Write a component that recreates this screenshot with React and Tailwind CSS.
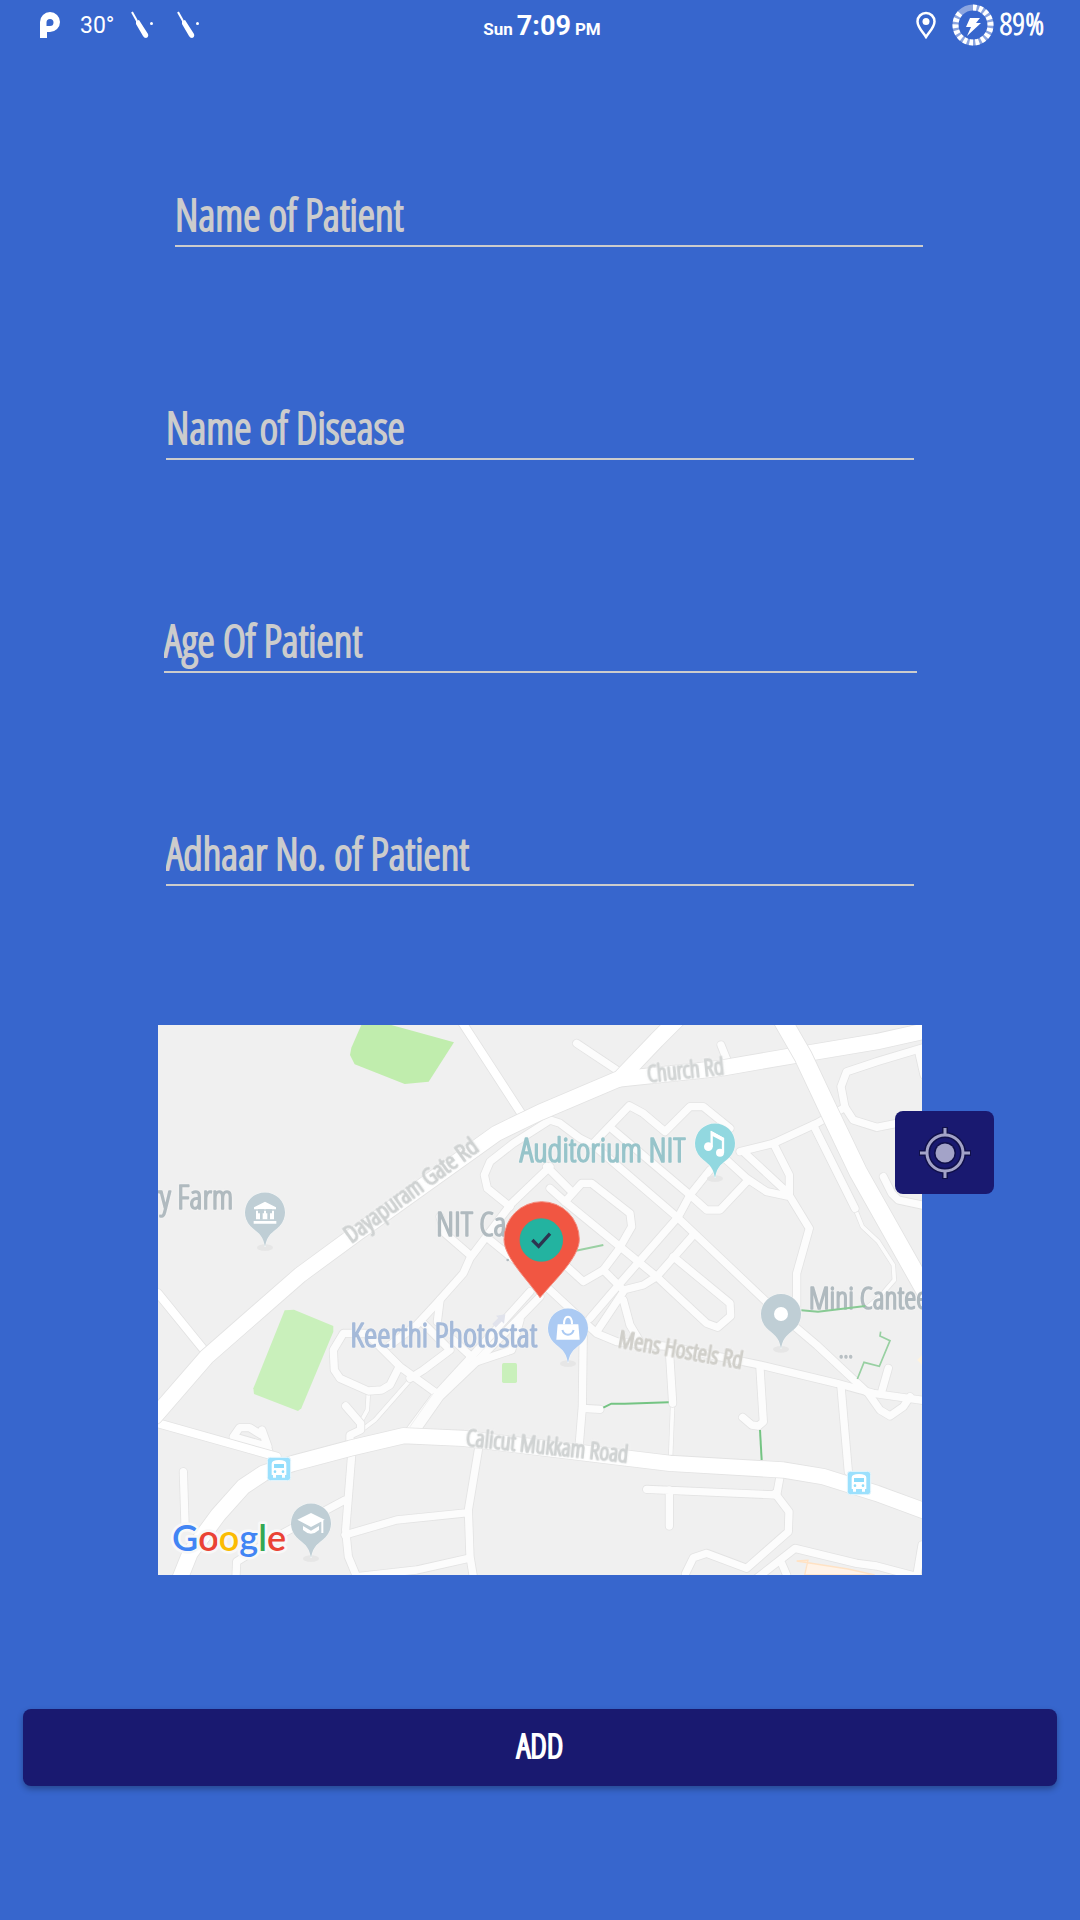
const HAND =
  "font-['Open_Sans_Condensed_Light','Open_Sans_Condensed','Liberation_Sans',sans-serif]";

const fields = [
  { id: "patient", label: "Name of Patient", box: "ml-[175px] mr-[157px]" },
  { id: "disease", label: "Name of Disease", box: "mx-[166px]" },
  { id: "age", label: "Age Of Patient", box: "ml-[164px] mr-[163px]" },
  { id: "adhaar", label: "Adhaar No. of Patient", box: "mx-[166px]" },
];

const majorRoads = [
  "M-10 1175L146 995L306 855L426 750L596 625L1016 325L1096 286L1146 262L1386 160L1496 45L1556 -15",
  "M1386 162L1686 130L1946 85L2156 50L2300 18",
  "M60 1675L96 1585L180 1470L256 1385L316 1345L406 1315L576 1270L736 1232L916 1240L1146 1268L1536 1315L1876 1335L1996 1355L2156 1405L2300 1458",
];

const minorRoads = [
  "M1256 55L1376 135",
  "M1689 60L1711 115",
  "M2300 67L2156 110L2066 140L2049 185L2061 247L2086 285L2156 307L2216 295",
  "M2281 75L2298 150",
  "M2061 247L1976 295L1846 355L1746 380",
  "M1966 300L2091 550",
  "M2176 455L2201 505L2221 525L2300 542",
  "M1056 545L988 490L979 450L996 410L1066 355L1176 285L1206 295L1266 340L1306 360L1556 575L1846 850L1976 960L2131 1105L2166 1155L2196 1173L2236 1145L2256 1115",
  "M1306 355L1414 242L1456 265L1521 320L1596 245L1636 245L1716 310",
  "M1366 315L1596 510L1646 555L1686 555L1766 470",
  "M1706 405L1766 460L1826 500L1896 515L1954 610L1916 745L1916 855",
  "M1756 380L1891 505M1846 355L1894 450L1894 510",
  "M1656 435L1596 510L1561 575L1386 775L1296 880",
  "M1176 425L1061 535L936 700L916 745L836 835L776 900L696 960",
  "M1166 425L1241 500",
  "M1221 530L1271 475L1301 475L1416 565L1421 605L1381 675L1336 735L1276 770L1216 715",
  "M1176 490L1221 530L1496 755L1646 895L1679 907L1718 873L1716 835L1546 695",
  "M1606 630L1496 755L1456 780L1396 795L1336 735",
  "M1396 800L1316 920M1396 825L1416 900L1446 950",
  "M1160 780L1316 925L1376 950L1536 965L1806 1020L2036 1075L2146 1105L2300 1127",
  "M1276 900L1273 1145L1264 1255M1273 1150L1326 1153",
  "M1534 975L1544 1135",
  "M1806 1030L1816 1190L1801 1203L1781 1200L1754 1177",
  "M2049 1085L2071 1340",
  "M2191 1030L2171 1100",
  "M1466 1393L1856 1410L1866 1355M1534 1395L1534 1503",
  "M1851 1405L1893 1460L1891 1520L1766 1630L1646 1585L1606 1598L1583 1645",
  "M1796 1660L1911 1570L2096 1615L2156 1623L2276 1655L2292 1560M1871 1615L1886 1650",
  "M1116 800L936 1000L826 1120L756 1215",
  "M1146 815L956 1010L846 1115L776 1215",
  "M846 825L838 890M796 895L876 975L796 1035L756 1060",
  "M836 1105L726 1025L626 925L556 925L526 975L529 1035L546 1060L631 1098L671 1095L696 1080L721 1030",
  "M1086 885L1061 975L956 1010L886 945",
  "M563 1143L608 1195L608 1215L576 1230L576 1255",
  "M581 1290L563 1515L571 1595L596 1655L776 1635L931 1600",
  "M561 1530L716 1485L931 1463M961 1275L931 1455L936 1595L946 1655",
  "M561 1425L356 1535L236 1610L234 1655",
  "M76 1340L81 1495",
  "M846 575L861 625L936 690M996 645L1076 710",
  "M226 1235L245 1208L275 1208L310 1230M226 1235L330 1265L312 1215L336 1290",
];

const lesserRoads = [
  "M2091 550L2113 605L2161 650L2206 720L2209 765L2166 815L2130 845",
  "M1544 1135L1538 1290",
  "M631 1105L628 1155L606 1195",
  "M761 1060L651 1185L611 1215",
];

const sideRoads = ["M911 -10L1096 275", "M0 805L146 985", "M-10 1192L356 1295"];
const highway = ["M1870 -20L1936 95L2016 265L2100 440L2300 795"];

function Roads({ paths, casing, width, fill }) {
  return (
    <>
      {paths.map((d) => (
        <path key={"c" + d} d={d} stroke="#e3e3e3" strokeWidth={casing} />
      ))}
      {paths.map((d) => (
        <path key={d} d={d} stroke={fill} strokeWidth={width} />
      ))}
    </>
  );
}

function Pin({ x, y, color, children }) {
  return (
    <g transform={`translate(${x} ${y})`}>
      <ellipse cx="0" cy="106" rx="24" ry="10" fill="#e6e6e6" />
      <path
        d="M0 104C-6 66-22 62-44 41A60 60 0 1 1 44 41C22 62 6 66 0 104Z"
        fill={color}
        stroke="#f6f8f8"
        strokeWidth="3"
        paintOrder="stroke"
      />
      {children}
    </g>
  );
}

function Bus({ x, y }) {
  return (
    <g transform={`translate(${x} ${y})`}>
      <rect x="-35" y="-35" width="70" height="70" rx="9" fill="#9be0fd" stroke="#e8f6fc" strokeWidth="3" />
      <path
        d="M-22-16Q-22-27 0-27Q22-27 22-16V18H18V26H9V18H-9V26H-18V18H-22Z"
        fill="#fff"
      />
      <path d="M-15-15H15V-3H-15Z" fill="#8edcfb" />
      <circle cx="-12" cy="8" r="4" fill="#8edcfb" />
      <circle cx="12" cy="8" r="4" fill="#8edcfb" />
    </g>
  );
}

function Label({ x, y, size, color, angle = 0, anchor = "start", children }) {
  return (
    <text
      transform={`translate(${x} ${y}) rotate(${angle})`}
      fontSize={size}
      textAnchor={anchor}
      fill={color}
      stroke={color}
      strokeWidth="5"
      strokeLinejoin="round"
      className="[filter:drop-shadow(0_0_4px_#f6f6f6)]"
    >
      {children}
    </text>
  );
}

function Map() {
  return (
    <svg
      viewBox="0 0 2292 1650"
      className={"block w-full bg-[#f0f0f0] " + HAND}
      role="img"
      aria-label="Map around NIT Calicut"
    >
      <path d="M610 0H700L888 52L812 170L740 177L590 118L576 90L580 68Z" fill="#c0edad" />
      <path d="M380 856L408 854L526 903V920L430 1150L420 1158L288 1107L286 1090Z" fill="#c9f0bb" />
      <rect x="1032" y="1014" width="45" height="60" rx="5" fill="#c9f0bb" />
      <path d="M1916 1608L1950 1606L1940 1650H2150L2070 1632Z" fill="#fff3e8" stroke="#ffe2c4" strokeWidth="4" />
      <path d="M2278 1005L2292 990V1020Z" fill="#fff3dd" />
      <g fill="none" strokeLinecap="round" strokeLinejoin="round">
        <Roads paths={lesserRoads} casing="15" width="11" fill="#fcfcfc" />
        <Roads paths={minorRoads} casing="27" width="22" fill="#fcfcfc" />
        <Roads paths={sideRoads} casing="29" width="24" fill="#fff" />
        <Roads paths={majorRoads} casing="51" width="46" fill="#fff" />
        <Roads paths={highway} casing="58" width="53" fill="#fff" />
        <path d="M1008 902L1030 880" stroke="#e1e3ec" strokeWidth="15" strokeLinecap="butt" />
        <path d="M1014 872L1042 868L1038 896Z" fill="#e1e3ec" />
        <path d="M826 1105L756 1205" stroke="#e9e9e9" strokeWidth="2" />
      </g>
      <g fill="none" stroke="#74c483" strokeWidth="6">
        <path d="M1250 678L1336 660" stroke="#9ad0a3" />
        <path d="M1336 1148L1360 1136H1400L1532 1132" />
        <path d="M1806 1215L1811 1305" />
        <path d="M2168 920L2166 933L2196 947L2164 1024L2118 1012L2098 1062" stroke="#98d0a2" strokeWidth="5" />
      </g>
      <circle cx="1049" cy="705" r="4" fill="#b0babf" />

      <Label x="1470" y="172" size="70" angle="-6" color="#d2d5d5">Church Rd</Label>
      <Label x="580" y="656" size="74" angle="-36" color="#cfd2d2">Dayapuram Gate Rd</Label>
      <Label x="922" y="1262" size="70" angle="6" color="#d0d3d3">Calicut Mukkam Road</Label>
      <Label x="1378" y="966" size="70" angle="10" color="#d0cfca">Mens Hostels Rd</Label>
      <Label x="1582" y="412" size="102" anchor="end" color="#97c4ca">Auditorium NIT</Label>
      <Label x="226" y="552" size="102" anchor="end" color="#b0babf">ry Farm</Label>
      <Label x="834" y="634" size="102" color="#b0babf">NIT Ca</Label>
      <Label x="1138" y="967" size="102" anchor="end" color="#a5bad9">Keerthi Photostat</Label>
      <Label x="1952" y="852" size="92" color="#b0babf">Mini Cantee</Label>
      <Label x="2042" y="1000" size="70" color="#b9c0c4">...</Label>
      <path d="M1930 856L1980 860L2122 843" fill="none" stroke="#88ca94" strokeWidth="6" />

      <Pin x={321} y={562} color="#bfced5">
        <path d="M-33-15L0-32L33-15V-9H-33ZM-27-5H27V21H-27ZM-34 26H34V34H-34Z" fill="#fff" />
        <path d="M-21-9H-3V3H-7V22H-15V3H-21ZM3-9H21V3H15V22H7V3H3Z" fill="#bfced5" />
      </Pin>
      <Pin x={1671} y={355} color="#92d8e0">
        <path d="M-10 12V-32L24-14V28" fill="none" stroke="#fff" strokeWidth="7" />
        <path d="M-12-38L27-16V-4L-12-24Z" fill="#fff" />
        <circle cx="-20" cy="10" r="13" fill="#fff" />
        <circle cx="15" cy="28" r="12" fill="#fff" />
      </Pin>
      <Pin x={459} y={1495} color="#bfced5">
        <path d="M0-31L41-11L0 11L-41-11ZM-24 8L0 22L24 8V20Q0 42-24 20ZM31-8H37V29H31Z" fill="#fff" />
      </Pin>
      <Pin x={1869} y={867} color="#bfced5">
        <circle r="21" fill="#fff" />
      </Pin>
      <Pin x={1230} y={910} color="#abcaf3">
        <path d="M-31-12H31L35 34H-35Z" fill="#fff" />
        <path d="M-12-12C-12-42 12-42 12-12" fill="none" stroke="#fff" strokeWidth="6" />
        <path d="M-17 5C-11 24 11 24 17 5" fill="none" stroke="#abcaf3" strokeWidth="6" />
      </Pin>
      <Bus x={363} y={1332} />
      <Bus x={2103} y={1374} />

      <path
        d="M1146 818C1110 765 1038 698 1038 643A113 113 0 0 1 1264 643C1264 698 1190 765 1146 818Z"
        fill="#f15642"
        stroke="#f48c7e"
        strokeWidth="3"
      />
      <circle cx="1150" cy="645" r="64" fill="#23b3a0" stroke="#12b9a5" strokeWidth="2" />
      <path d="M1123 645L1142 664L1176 626" fill="none" stroke="#2d3550" strokeWidth="10" />

      <text
        x="42"
        y="1578"
        fontSize="108"
        stroke="#f8f8f8"
        strokeWidth="16"
        strokeLinejoin="round"
        paintOrder="stroke"
        className="font-['Lato',sans-serif] font-semibold"
      >
        <tspan fill="#4285f4">G</tspan>
        <tspan fill="#ea4335">o</tspan>
        <tspan fill="#fbbc04">o</tspan>
        <tspan fill="#4285f4">g</tspan>
        <tspan fill="#34a853">l</tspan>
        <tspan fill="#ea4335">e</tspan>
      </text>
    </svg>
  );
}

function Screwdriver() {
  return (
    <svg viewBox="0 0 22 28" className="h-7 w-[22px]" fill="none" stroke="#fff" aria-hidden="true">
      <path d="M1 1L6 10" strokeWidth="2" />
      <path d="M5 10L8 9L17 23Q18 26 15 27Q13 27 12 25L5 13Z" fill="#fff" stroke="none" />
      <circle cx="20.500" cy="12.500" r="1.500" fill="#fff" stroke="none" />
    </svg>
  );
}

function StatusBar() {
  return (
    <header className="grid h-[50px] grid-cols-[1fr_auto_1fr] items-center pr-9 pl-10 text-white">
      <div className="flex items-center">
        <svg viewBox="0 0 20 26" className="h-[26px] w-5" aria-hidden="true">
          <path
            fillRule="evenodd"
            fill="#fff"
            d="M0 26V10A10 10 0 1 1 10 20H7V26ZM10 7A3.500 3.500 0 0 0 6.500 10.500V14H10A3.500 3.500 0 0 0 10 7Z"
          />
        </svg>
        <span className="ml-5 w-[51px] pt-0.5 font-['Roboto',sans-serif] text-[23px] leading-[30px] font-normal">30°</span>
        <Screwdriver />
        <span className="w-6" />
        <Screwdriver />
      </div>
      <div className="flex items-baseline gap-1 pt-1 font-['Roboto',sans-serif] font-bold">
        <span className="text-[17px] leading-8">Sun</span>
        <span className="text-[27px] leading-8">7:09</span>
        <span className="text-[17px] leading-8">PM</span>
      </div>
      <div className="flex items-center justify-end">
        <svg viewBox="0 0 20 28" className="mr-4 h-7 w-5" fill="none" stroke="#fff" aria-hidden="true">
          <path d="M10 26C6 20 1.500 16 1.500 10.500A8.500 8.500 0 0 1 18.500 10.500C18.500 16 14 20 10 26Z" strokeWidth="2.500" />
          <circle cx="10" cy="10.500" r="3.500" fill="#fff" stroke="none" />
        </svg>
        <svg viewBox="0 0 42 42" className="mr-1.5 h-[42px] w-[42px]" aria-hidden="true">
          <circle cx="21" cy="21" r="17.500" fill="none" stroke="#8ba5e0" strokeWidth="6" />
          <circle
            cx="21"
            cy="21"
            r="17.500"
            fill="none"
            stroke="#fff"
            strokeWidth="6"
            pathLength="180"
            strokeDasharray="6 4 6 4 6 4 6 4 6 4 6 4 6 4 6 4 6 4 6 4 6 4 6 4 6 4 6 4 6 4 6 30"
            transform="rotate(-90 21 21)"
          />
          <path d="M18 14H28L24 19H29L15 32L19 23H14Z" fill="#fff" />
        </svg>
        <span className="pb-1 text-[32px] leading-8 [-webkit-text-stroke:1px]">89%</span>
      </div>
    </header>
  );
}

export default function App() {
  return (
    <div className={"min-h-screen bg-[#3766cd] pb-[133px] " + HAND}>
      <StatusBar />
      <main>
        <form className="flex flex-col" onSubmit={(e) => e.preventDefault()}>
          <div className="flex flex-col gap-[149px] pt-[133px]">
            {fields.map((f) => (
              <div key={f.id} className={"flex h-16 " + f.box}>
                <input
                  id={f.id}
                  type="text"
                  aria-label={f.label}
                  placeholder={f.label}
                  className="w-full min-w-0 border-b-2 border-[#cccccc] bg-transparent text-[44px] leading-[60px] text-white outline-none [-webkit-text-stroke:2px] placeholder:text-[#cccccc] placeholder:opacity-100"
                />
              </div>
            ))}
          </div>
          <div className="relative mx-[158px] mt-[139px]">
            <Map />
            <button
              type="button"
              aria-label="Use my location"
              className="absolute top-[86px] -right-[72px] flex h-[83px] w-[99px] items-center justify-center rounded-lg bg-[#191970]"
            >
              <svg viewBox="0 0 52 52" className="h-[52px] w-[52px]" fill="none" aria-hidden="true">
                <g stroke="#10104a" strokeWidth="6">
                  <circle cx="26" cy="26" r="18" />
                  <path d="M26 0V9M26 43V52M0 26H9M43 26H52" />
                </g>
                <circle cx="26" cy="26" r="11" fill="#10104a" />
                <g stroke="#a3a3c8" strokeWidth="3">
                  <circle cx="26" cy="26" r="18" />
                  <path d="M26 1V8M26 44V51M1 26H8M44 26H51" />
                </g>
                <circle cx="26" cy="26" r="9.500" fill="#a3a3c8" />
              </svg>
            </button>
          </div>
          <button
            type="submit"
            className="mx-[23px] mt-[134px] h-[77px] rounded-lg bg-[#191970] pb-1.5 text-[34px] leading-10 text-white shadow-[0_3px_6px_rgba(0,0,0,0.3)] [-webkit-text-stroke:2px]"
          >
            ADD
          </button>
        </form>
      </main>
    </div>
  );
}
